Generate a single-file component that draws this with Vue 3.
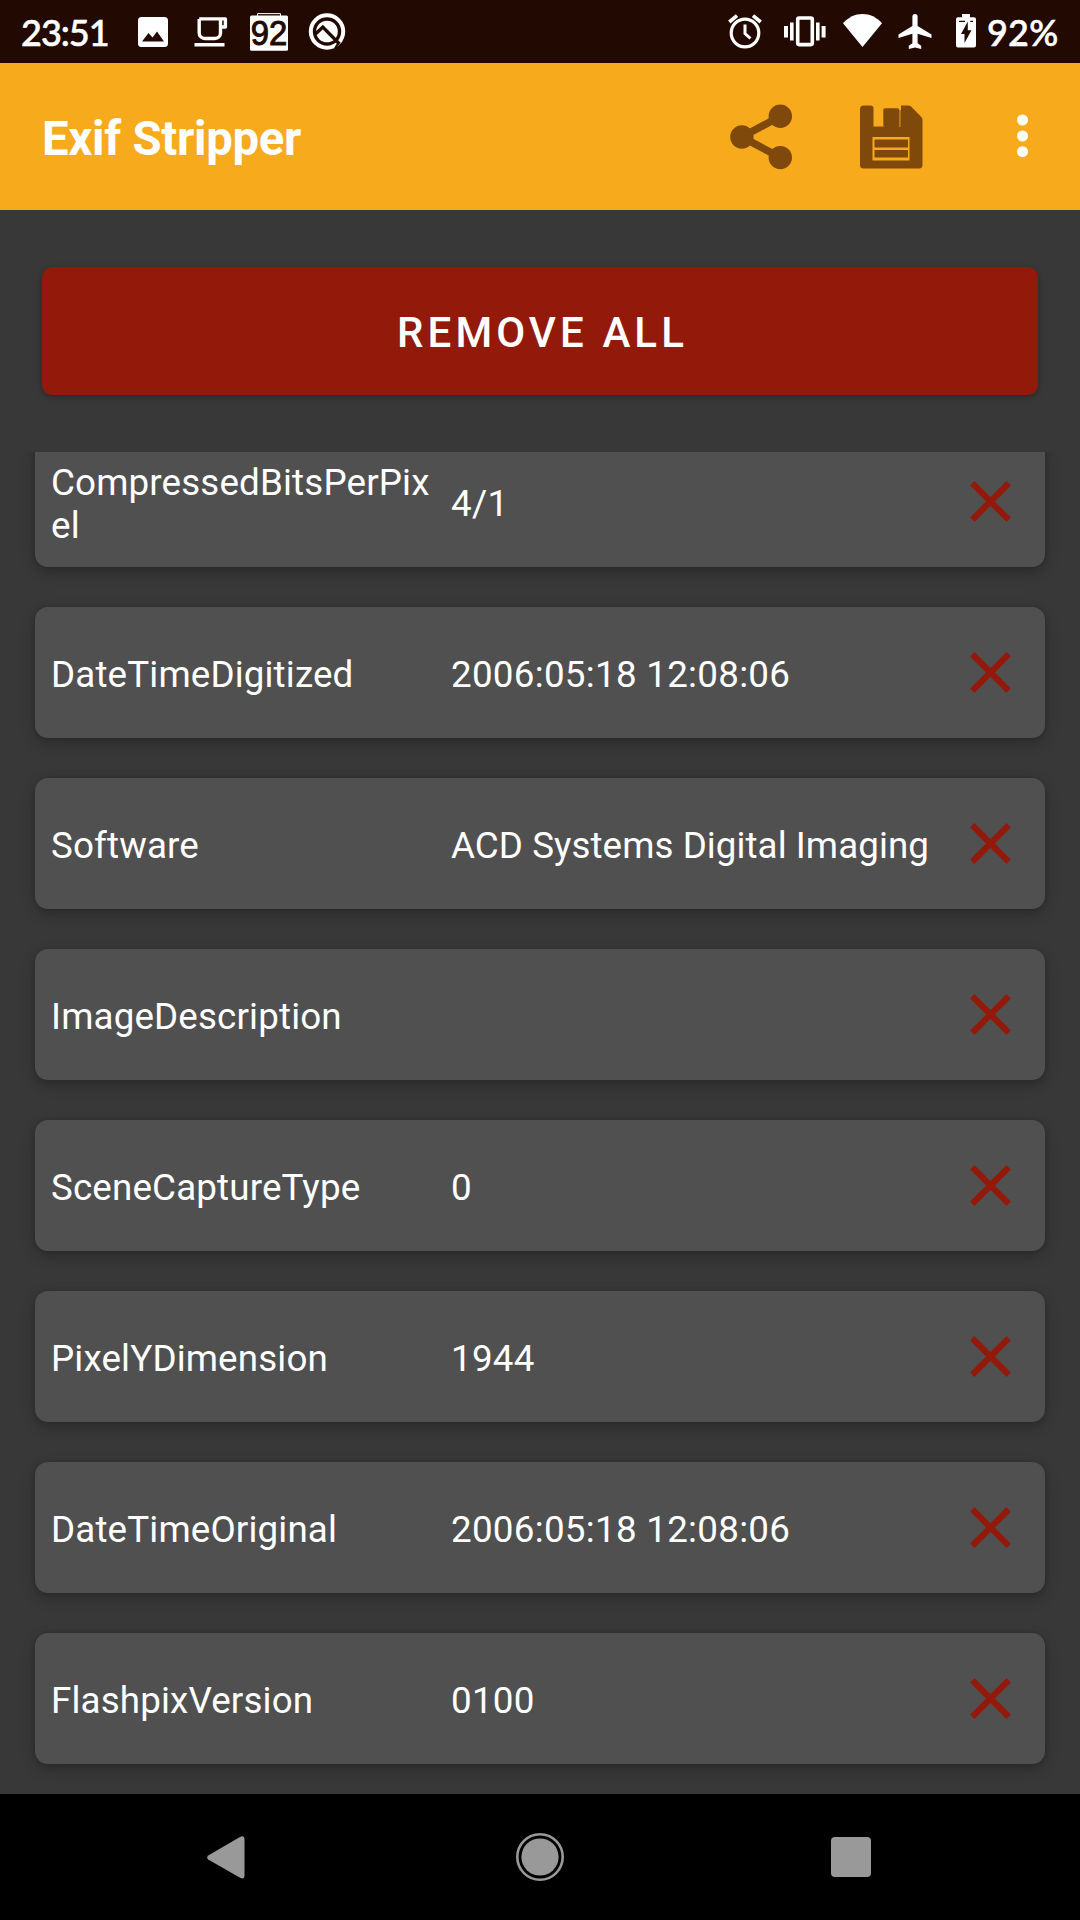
<script setup>
const tags = [
  { name: 'CompressedBitsPerPixel', value: '4/1' },
  { name: 'DateTimeDigitized', value: '2006:05:18 12:08:06' },
  { name: 'Software', value: 'ACD Systems Digital Imaging' },
  { name: 'ImageDescription', value: '' },
  { name: 'SceneCaptureType', value: '0' },
  { name: 'PixelYDimension', value: '1944' },
  { name: 'DateTimeOriginal', value: '2006:05:18 12:08:06' },
  { name: 'FlashpixVersion', value: '0100' },
]

const isNumeric = (value) => /^[\d:/ ]+$/.test(value)
</script>

<template>
  <div class="screen">
    <header class="status">
      <span class="clock">23:51</span>
      <svg class="s-image" width="30" height="30" viewBox="0 0 30 30">
        <path fill="#fff" fill-rule="evenodd" d="M3.500 0h23A3.500 3.500 0 0 1 30 3.500v23a3.500 3.500 0 0 1-3.500 3.500h-23A3.500 3.500 0 0 1 0 26.500v-23A3.500 3.500 0 0 1 3.500 0zM4 24.500h22L19 14.500l-4.500 6-4-4.500z" />
      </svg>
      <svg class="s-cup" width="34" height="30" viewBox="0 0 34 30">
        <path fill="none" stroke="#fff" stroke-width="3.400" stroke-linejoin="round" d="M5.200 1.900H31.400V10H26.500M26.500 1.900V16a5.500 5.500 0 0 1-5.500 5.500H10.700A5.500 5.500 0 0 1 5.200 16V1.900" />
        <path fill="#fff" d="M.5 26h30v3.500H.5z" />
      </svg>
      <svg class="s-level" width="38" height="38" viewBox="0 0 38 38">
        <path fill="none" stroke="#fff" stroke-width="1" d="M7.500 3V.6h23V3" />
        <rect y="2.500" width="38" height="35.300" rx="1.500" fill="#fff" />
        <text x="19" y="32" text-anchor="middle" font-family="'Liberation Sans', sans-serif" font-size="35" textLength="36.500" lengthAdjust="spacingAndGlyphs" fill="#220a02" stroke="#220a02" stroke-width="1">92</text>
      </svg>
      <svg class="s-q" width="38" height="38" viewBox="0 0 38 38">
        <circle cx="19" cy="19.500" r="16.200" fill="none" stroke="#fff" stroke-width="4" />
        <circle cx="19" cy="19.500" r="10.800" fill="#fff" />
        <path fill="none" stroke="#220a02" stroke-width="3.300" d="M7.500 22L14.800 15L31.500 32" />
        <path fill="none" stroke="#220a02" stroke-width="2" d="M27 36.500L30 31.500" />
      </svg>
      <span class="spacer"></span>
      <svg class="s-alarm" width="34" height="35" viewBox="0 0 34 35">
        <circle cx="17" cy="19" r="13.800" fill="none" stroke="#fff" stroke-width="3.200" />
        <path fill="none" stroke="#fff" stroke-width="3" d="M17 10.500V19.500L22.500 24.500" />
        <path fill="none" stroke="#fff" stroke-width="3.600" d="M1.300 8L9 1.600M32.700 8L25 1.600" />
      </svg>
      <svg class="s-vibrate" width="42" height="31" viewBox="0 0 42 31">
        <rect x="13.700" y="2" width="14.600" height="26.600" rx="1.500" fill="none" stroke="#fff" stroke-width="3.600" />
        <path fill="#fff" d="M0 10h4v11.500H0zM6 6.500h3.600v18H6zM32 6.500h3.600v18H32zM37.600 10h4v11.500h-4z" />
      </svg>
      <svg class="s-wifi" width="39" height="33" viewBox="0 0 39 33">
        <path fill="#fff" d="M19.500 33L0 9.200C5.500 3.200 12 0 19.500 0S33.500 3.200 39 9.200z" />
      </svg>
      <svg class="s-plane" width="34" height="35" viewBox="0 0 34 35">
        <path fill="#fff" d="M33.500 24v-3.400L19.600 12V2.600a2.600 2.600 0 0 0-5.200 0V12L.5 20.600V24l13.900-4.200v9.400l-3.600 2.600V35l6.200-1.500 6.200 1.500v-3.200l-3.600-2.600v-9.400z" />
      </svg>
      <svg class="s-battery" width="20" height="34" viewBox="0 0 20 34">
        <path fill="#fff" d="M6 0h8v3.300h4a2 2 0 0 1 2 2V31.500a2 2 0 0 1-2 2H2a2 2 0 0 1-2-2V5.300a2 2 0 0 1 2-2h4z" />
        <path fill="#220a02" d="M3 6.800h6v1.300H3zM14.300 6.800H17v1.300h-2.700zM11.800 7.500V16.200H15.500L8.500 29V20H5z" />
      </svg>
      <span class="percent">92%</span>
    </header>

    <div class="appbar">
      <h1 class="title">Exif Stripper</h1>
      <svg class="share" width="63" height="66" viewBox="0 0 63 66">
        <path fill="none" stroke="#80490c" stroke-width="7.500" d="M50.300 12.300L12 33L50.300 53.500" />
        <circle cx="50.300" cy="12.200" r="11.700" fill="#80490c" />
        <circle cx="11.900" cy="33" r="11.700" fill="#80490c" />
        <circle cx="50.300" cy="53.600" r="11.700" fill="#80490c" />
      </svg>
      <svg class="save" width="63" height="64" viewBox="0 0 63 64">
        <path fill="#80490c" fill-rule="evenodd" d="M3.500.5h7a3 3 0 0 1 3 3V21.500H41V.5H48.500a4 4 0 0 1 2.600 1L61.300 12a4 4 0 0 1 1.200 2.800V60a3.500 3.500 0 0 1-3.500 3.500H3.500A3.500 3.500 0 0 1 0 60V4A3.500 3.500 0 0 1 3.500.5zM12.500 32V55.500H49.500V32z" />
        <rect x="23.300" y="3.300" width="16" height="18.600" rx="2" fill="#80490c" />
        <path fill="#b06f12" d="M39.300 5h1.700v17h-1.700z" />
        <path fill="#80490c" d="M14.500 34.500H48v8H14.500zM14.500 45H48v7.500H14.500z" />
      </svg>
      <svg class="more" width="12" height="44" viewBox="0 0 12 44">
        <circle cx="6.500" cy="6" r="5.500" fill="#fff" />
        <circle cx="6.500" cy="22" r="5.500" fill="#fff" />
        <circle cx="6.500" cy="37.700" r="5.500" fill="#fff" />
      </svg>
    </div>

    <button class="remove-all" type="button">REMOVE ALL</button>

    <main class="list">
      <article v-for="tag in tags" :key="tag.name" class="card">
        <span class="name">{{ tag.name }}</span>
        <span class="value" :class="{ numeric: isNumeric(tag.value) }">{{ tag.value }}</span>
        <svg class="cross" width="41" height="41" viewBox="0 0 41 41">
          <path fill="none" stroke="#931a0b" stroke-width="6.200" d="M2.300 2.300L38.700 38.700M38.700 2.300L2.300 38.700" />
        </svg>
      </article>
    </main>

    <nav class="navbar">
      <svg class="n-back" width="38" height="43" viewBox="0 0 38 43">
        <path fill="#999" d="M1.200 19.500L33 .9Q37.500-.8 37.500 3V40Q37.500 43.500 33.500 42L1.200 23.500Q-.8 21.500 1.200 19.500z" />
      </svg>
      <svg class="n-home" width="48" height="48" viewBox="0 0 48 48">
        <circle cx="24" cy="24" r="22.700" fill="none" stroke="#999" stroke-width="2.600" />
        <circle cx="24" cy="24" r="18.600" fill="#999" />
      </svg>
      <span class="n-recent"></span>
    </nav>
  </div>
</template>

<style>
body {
  margin: 0;
  background: #383838;
}
</style>

<style scoped>
.screen {
  width: 1080px;
  height: 1920px;
  display: flex;
  flex-direction: column;
  overflow: hidden;
  background: #383838;
  color: #fff;
  font-family: Roboto, sans-serif;
}
svg {
  display: block;
  flex: none;
}
.status {
  flex: none;
  box-sizing: border-box;
  height: 63px;
  padding: 0 21px;
  display: flex;
  align-items: flex-start;
  background: #220a02;
}
.clock,
.percent {
  font: 500 36px/65px Lato, sans-serif;
  -webkit-text-stroke: 0.6px #fff;
  white-space: nowrap;
}
.clock {
  width: 117px;
  letter-spacing: -1px;
}
.percent {
  width: 72px;
  letter-spacing: 0.2px;
}
.s-image { margin: 17px 26px 0 0; }
.s-cup { margin: 17px 22px 0 0; }
.s-level { margin: 13px 20px 0 0; overflow: visible; }
.s-q { margin-top: 12px; }
.spacer { flex: 1; }
.s-alarm { margin: 14px 22px 0 0; }
.s-vibrate { margin: 16px 17px 0 0; }
.s-wifi { margin: 14px 16px 0 0; }
.s-plane { margin: 14px 24px 0 0; }
.s-battery { margin: 14px 11px 0 0; }
.appbar {
  flex: none;
  box-sizing: border-box;
  height: 147px;
  padding: 0 52px 0 42px;
  display: flex;
  align-items: center;
  background: #f8aa1d;
}
.title {
  flex: 1;
  margin: 4px 0 0;
  font-size: 47.250px;
  line-height: 56px;
  font-weight: 700;
  letter-spacing: -0.280px;
  white-space: nowrap;
}
.share { margin-right: 67px; }
.save { margin-right: 93px; }
.more { margin-bottom: 1px; }
.remove-all {
  flex: none;
  height: 128px;
  margin: 57px 42px;
  padding: 4px 0 0 5px;
  border: 0;
  border-radius: 10px;
  background: #931a0b;
  box-shadow: 0 2px 6px rgba(0, 0, 0, 0.28);
  color: #fff;
  font: 500 42px/50px Roboto, sans-serif;
  letter-spacing: 4.100px;
}
.list {
  flex: 1;
  min-height: 0;
  overflow: hidden;
  padding: 0 35px;
}
.card {
  box-sizing: border-box;
  height: 131px;
  margin-bottom: 40px;
  padding: 0 34px 0 16px;
  display: flex;
  align-items: center;
  border-radius: 13px;
  background: #505050;
  box-shadow: 0 5px 13px rgba(0, 0, 0, 0.25), 0 0 4px rgba(0, 0, 0, 0.1);
  font-size: 36.750px;
  line-height: 43px;
}
.card:first-child {
  margin-top: -16px;
}
.name {
  width: 384px;
  margin-right: 16px;
  padding-top: 3px;
  letter-spacing: 0.150px;
  overflow-wrap: anywhere;
}
.card:first-child .name {
  padding-top: 5px;
}
.value {
  flex: 1;
  padding-top: 3px;
  letter-spacing: 0.060px;
  white-space: nowrap;
}
.value.numeric {
  letter-spacing: 0.280px;
}
.navbar {
  flex: none;
  height: 126px;
  display: flex;
  align-items: center;
  background: #000;
}
.n-back { margin-left: 206.500px; }
.n-home { margin-left: 271.500px; }
.n-recent {
  width: 40px;
  height: 40px;
  margin-left: 267px;
  border-radius: 4px;
  background: #999;
}
</style>
